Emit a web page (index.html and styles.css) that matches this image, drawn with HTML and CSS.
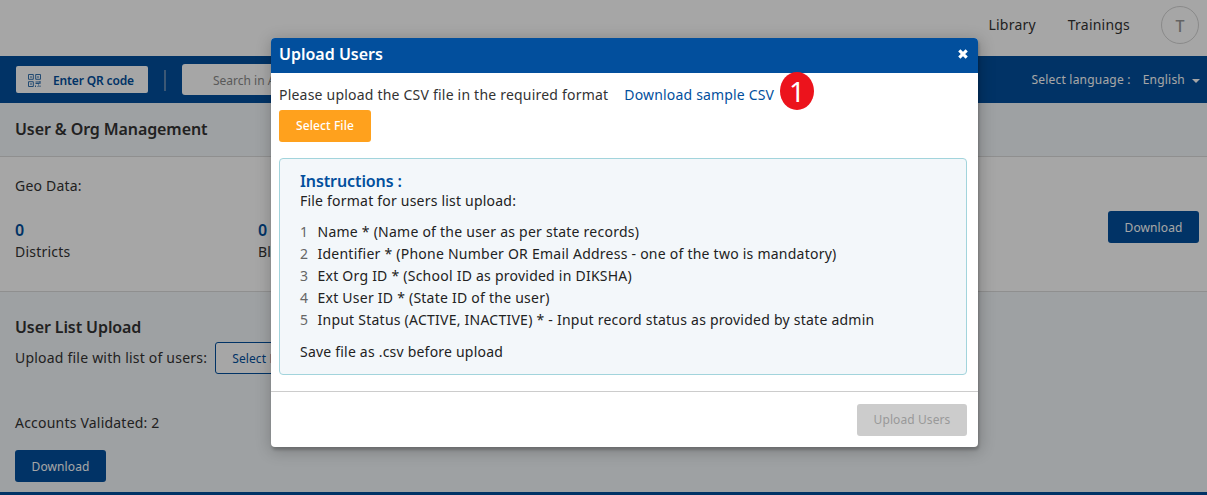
FILE: index.html
```html
<!DOCTYPE html>
<html lang="en">
<head>
<meta charset="utf-8">
<title>User &amp; Org Management</title>
<link rel="stylesheet" href="styles.css">
</head>
<body>
<div class="page">
  <header class="topbar">
    <a class="nav-library">Library</a>
    <a class="nav-trainings">Trainings</a>
    <span class="avatar">T</span>
  </header>
  <nav class="toolbar">
    <button class="qr-button">
      <svg class="qr-icon" viewBox="0 0 13 13" width="13" height="13" fill="none" stroke="currentColor">
        <path d="M.5.5h4.8v4.8H.5zM7.7.5h4.8v4.8H7.7zM.5 7.7h4.8v4.8H.5z"/>
        <path d="M2 3h2M9 3h2M2 10h2M7.5 8h5M7.5 9.5h4M12 7v3M10 11h1M7.5 11.5v1.5M9.5 12.5h1M12 11.5v1.5"/>
      </svg>
      <span>Enter QR code</span>
    </button>
    <span class="toolbar-divider"></span>
    <div class="search">Search in All</div>
    <div class="language"><span class="language-label">Select language :</span><span>English</span><span class="caret"></span></div>
  </nav>
  <section class="page-heading"><h1 class="heading">User &amp; Org Management</h1></section>
  <section class="geo">
    <p class="geo-title">Geo Data:</p>
    <div class="geo-row">
      <div class="stat"><strong class="stat-value">0</strong><span>Districts</span></div>
      <div class="stat"><strong class="stat-value">0</strong><span>Blocks</span></div>
      <button class="button geo-download">Download</button>
    </div>
  </section>
  <section class="upload">
    <h2 class="heading">User List Upload</h2>
    <div class="upload-row"><span class="upload-label">Upload file with list of users:</span><button class="button outline">Select File</button></div>
    <p class="validated">Accounts Validated: 2</p>
    <button class="button">Download</button>
  </section>
  <footer class="footer"></footer>
</div>
<div class="dimmer">
  <div class="modal">
    <div class="modal-header">
      <span class="modal-title">Upload Users</span>
      <svg class="close" viewBox="0 0 10 10" width="10" height="10"><path d="M1.3 1.3l7.4 7.4M8.7 1.3l-7.4 7.4" stroke="currentColor" stroke-width="3.1"/></svg>
    </div>
    <div class="modal-body">
      <div class="request"><span class="request-text">Please upload the CSV file in the required format</span><a class="sample-link">Download sample CSV</a><span class="marker">1</span></div>
      <button class="button orange">Select File</button>
      <div class="instructions">
        <h3 class="instructions-title">Instructions :</h3>
        <p class="intro">File format for users list upload:</p>
        <ol class="fields">
          <li><span class="number">1</span><span>Name * (Name of the user as per state records)</span></li>
          <li><span class="number">2</span><span>Identifier * (Phone Number OR Email Address - one of the two is mandatory)</span></li>
          <li><span class="number">3</span><span>Ext Org ID * (School ID as provided in DIKSHA)</span></li>
          <li><span class="number">4</span><span>Ext User ID * (State ID of the user)</span></li>
          <li><span class="number">5</span><span>Input Status (ACTIVE, INACTIVE) * - Input record status as provided by state admin</span></li>
        </ol>
        <p class="outro">Save file as .csv before upload</p>
      </div>
    </div>
    <div class="modal-footer"><button class="button disabled">Upload Users</button></div>
  </div>
</div>
</body>
</html>
```
FILE: styles.css
```css
* { box-sizing: border-box; }
body { margin: 0; width: 1207px; height: 495px; overflow: hidden; position: relative; font: 14px/20px "Noto Sans", sans-serif; letter-spacing: .21px; color: #333; }
h1, h2, h3, p, ol { margin: 0; padding: 0; list-style: none; font-weight: 400; }
.page { height: 495px; display: flex; flex-direction: column; background: #fff; }
.topbar { height: 56px; flex: none; display: flex; align-items: flex-start; justify-content: flex-end; padding: 6px 8px 0 0; }
.nav-library, .nav-trainings { padding-top: 9px; }
.nav-library { margin-right: 32px; }
.nav-trainings { margin-right: 31px; }
.avatar { width: 38px; height: 38px; border: 1px solid #d4d4d4; border-radius: 50%; color: #999; font: 500 16px/38px "Noto Sans", sans-serif; text-align: center; }
.toolbar { height: 47px; flex: none; background: #024f9d; display: flex; align-items: center; padding: 0 7px 0 16px; }
.qr-button { width: 132px; height: 27px; padding: 1px 0 0 12px; border: 0; border-radius: 2px; background: #fff; color: #024f9d; display: flex; align-items: center; gap: 12px; font: 600 12px/27px "Noto Sans", sans-serif; letter-spacing: -.15px; white-space: nowrap; }
.qr-icon { opacity: .8; }
.toolbar-divider { width: 2px; height: 21px; margin: 2px 16px 0 16px; background: #5c87b4; }
.search { width: 300px; height: 31px; padding-left: 31px; border-radius: 3px; background: #fff; color: #8a8a8a; font-size: 12px; line-height: 33px; letter-spacing: 0; }
.language { margin-left: auto; display: flex; align-items: center; color: #fff; font-size: 12px; }
.language-label { margin-right: 12px; }
.caret { margin: 2px 0 0 7px; border: 4px solid transparent; border-top-color: #fff; border-bottom: 0; }
.page-heading { height: 54px; flex: none; padding: 15px 15px; background: #f3f7fa; border-bottom: 1px solid #dcdcdc; }
.heading { font-size: 16px; font-weight: 600; line-height: 22px; letter-spacing: -.1px; }
.geo { height: 135px; flex: none; padding: 19px 8px 0 15px; border-bottom: 1px solid #dcdcdc; }
.geo-row { display: flex; padding-top: 15px; }
.stat { width: 243px; padding-top: 8px; display: flex; flex-direction: column; }
.stat-value { color: #024f9d; font-size: 16px; line-height: 23px; font-weight: 600; }
.geo-download { margin-left: auto; }
.button { display: block; width: 91px; height: 32px; padding: 0; border: 0; border-radius: 3px; background: #024f9d; color: #fff; font: 12px/34px "Noto Sans", sans-serif; letter-spacing: .1px; text-align: center; }
.upload { flex: 1; min-height: 0; padding: 24px 15px 0; background: #f3f7fa; }
.upload-row { display: flex; align-items: center; gap: 8px; margin-top: 4px; }
.button.outline { background: #fff; border: 1px solid #024f9d; color: #024f9d; line-height: 32px; }
.validated { margin: 39px 0 17px; }
.footer { height: 3px; flex: none; background: #024f9d; }
.dimmer { position: absolute; inset: 0; background: rgba(0, 0, 0, .35); display: flex; justify-content: center; padding: 38px 0 0 42px; }
.modal { width: 707px; height: 409px; border-radius: 4px; background: #fff; box-shadow: 1px 3px 3px rgba(0, 0, 0, .2), 1px 3px 15px 2px rgba(0, 0, 0, .2); }
.modal-header { height: 35px; display: flex; align-items: center; justify-content: space-between; padding: 0 10px 4px 8px; border-radius: 4px 4px 0 0; background: #024f9d; color: #fff; }
.modal-title { font-size: 16px; font-weight: 600; letter-spacing: 0; }
.modal-body { height: 319px; padding: 12px 11px 0 8px; border-bottom: 1px solid #ccc; }
.request { position: relative; display: flex; align-items: center; margin-bottom: 5px; height: 20px; }
.request-text { margin-right: 16px; }
.sample-link { color: #024f9d; letter-spacing: .17px; }
.marker { position: absolute; left: 501px; top: -13px; width: 34px; height: 38px; border-radius: 50%; background: #ec131c; color: #fff; font: 28px/38px "Noto Sans", sans-serif; letter-spacing: 0; text-align: center; }
.button.orange { width: 92px; background: #ffa11d; line-height: 30px; font-weight: 500; }
.instructions { height: 217px; margin-top: 16px; padding: 13px 20px 0; background: #f3f7fa; border: 1px solid #a2d4dc; border-radius: 4px; color: #222; }
.instructions-title { color: #024f9d; font-size: 16px; line-height: 19px; font-weight: 600; letter-spacing: -.1px; }
.fields { margin-top: 10px; letter-spacing: .24px; }
.fields li { height: 22px; line-height: 22px; display: flex; white-space: nowrap; }
.number { width: 17.5px; color: #666; }
.outro { margin-top: 11px; }
.modal-footer { padding: 12px 11px; display: flex; justify-content: flex-end; }
.button.disabled { width: 110px; background: #ccc; color: #999; line-height: 32px; }
```
